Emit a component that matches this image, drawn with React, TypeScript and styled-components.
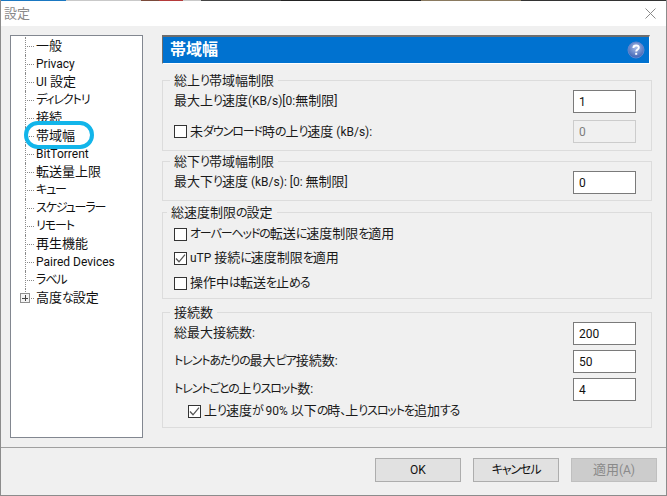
import React from 'react';
import styled, { createGlobalStyle } from 'styled-components';

const GlobalStyle = createGlobalStyle`
  html, body {
    margin: 0;
    padding: 0;
    background: #f0f0f0;
  }
  * {
    box-sizing: border-box;
  }
`;

const treeItems = [
  '一般',
  'Privacy',
  'UI 設定',
  'ディレクトリ',
  '接続',
  '帯域幅',
  'BitTorrent',
  '転送量上限',
  'キュー',
  'スケジューラー',
  'リモート',
  '再生機能',
  'Paired Devices',
  'ラベル',
  '高度な設定',
];

// 元画像のフォントは漢字が大きくかなが詰まっているので、文字種ごとに分ける
const Jp = ({ text }: { text: string }) => (
  <>
    {text
      .split(/([\u3400-\u9fff]+|[\u3001-\u30ff]+)/)
      .filter(Boolean)
      .map((part, i) => {
        if (/[\u3400-\u9fff]/.test(part)) return <Kanji key={i}>{part}</Kanji>;
        if (/[\u3001-\u30ff]/.test(part)) return <Kana key={i}>{part}</Kana>;
        return part;
      })}
  </>
);

const HelpIcon = () => (
  <svg width="18" height="18" viewBox="0 0 18 18">
    <defs>
      <radialGradient id="helpBall" cx="50%" cy="35%" r="65%">
        <stop offset="0%" stopColor="#a9bde8" />
        <stop offset="100%" stopColor="#3f63b4" />
      </radialGradient>
    </defs>
    <circle cx="9" cy="9" r="8" fill="url(#helpBall)" stroke="#5f86cf" strokeWidth="1" />
    <path
      d="M6.4 7 C6.4 5.3 7.6 4.5 9.1 4.5 C10.7 4.5 11.8 5.4 11.8 6.8 C11.8 8.6 9.2 8.6 9.2 10.6"
      fill="none"
      stroke="#fff"
      strokeWidth="1.9"
    />
    <rect x="8.2" y="11.8" width="2" height="2" fill="#fff" />
  </svg>
);

const CheckMark = () => (
  <svg width="11" height="11" viewBox="0 0 11 11">
    <path d="M1 5.5 L4 8.8 L10 1.6" fill="none" stroke="#555" strokeWidth="1.3" />
  </svg>
);

const App = () => {
  return (
    <Window>
      <GlobalStyle />
      <TopStrip />
      <TitleBar>
        <TitleText>設定</TitleText>
        <CloseButton>
          <svg width="11" height="11" viewBox="0 0 11 11">
            <path d="M0.5 0.5 L10.5 10.5 M10.5 0.5 L0.5 10.5" stroke="#8a8a8a" strokeWidth="1" fill="none" />
          </svg>
        </CloseButton>
      </TitleBar>

      <Body>
        <Tree>
          {treeItems.map((item, i) => (
            <TreeRow key={item} last={i === treeItems.length - 1}>
              {i === treeItems.length - 1 && <Expander />}
              <Jp text={item} />
            </TreeRow>
          ))}
          <Highlight />
        </Tree>

        <Panel>
          <Header>
            <HeaderTitle>帯域幅</HeaderTitle>
            <HelpIcon />
          </Header>

          <Group height={71}>
            <Legend>
              <Jp text="総上り帯域幅制限" />
            </Legend>
            <Row>
              <FieldLabel>
                <Jp text="最大上り速度(KB/s)[0:無制限]" />
              </FieldLabel>
              <NumberBox>1</NumberBox>
            </Row>
            <Row gap={7}>
              <CheckLabel>
                <CheckBox />
                <Label>
                  <Jp text="未ダウンロード時の上り速度 (kB/s):" />
                </Label>
              </CheckLabel>
              <NumberBox disabled>0</NumberBox>
            </Row>
          </Group>

          <Group height={40} top={10}>
            <Legend>
              <Jp text="総下り帯域幅制限" />
            </Legend>
            <Row>
              <FieldLabel>
                <Jp text="最大下り速度 (kB/s): [0: 無制限]" />
              </FieldLabel>
              <NumberBox>0</NumberBox>
            </Row>
          </Group>

          <Group height={87} top={11}>
            <Legend left={4}>
              <Jp text="総速度制限の設定" />
            </Legend>
            <CheckRow>
              <CheckLabel>
                <CheckBox />
                <Label>
                  <Jp text="オーバーヘッドの転送に速度制限を適用" />
                </Label>
              </CheckLabel>
            </CheckRow>
            <CheckRow>
              <CheckLabel>
                <CheckBox>
                  <CheckMark />
                </CheckBox>
                <Label>
                  <Jp text="uTP 接続に速度制限を適用" />
                </Label>
              </CheckLabel>
            </CheckRow>
            <CheckRow gap={1}>
              <CheckLabel>
                <CheckBox />
                <Label>
                  <Jp text="操作中は転送を止める" />
                </Label>
              </CheckLabel>
            </CheckRow>
          </Group>

          <Group height={116} top={13}>
            <Legend>
              <Jp text="接続数" />
            </Legend>
            <Row>
              <FieldLabel>
                <Jp text="総最大接続数:" />
              </FieldLabel>
              <NumberBox>200</NumberBox>
            </Row>
            <Row gap={5}>
              <FieldLabel>
                <Jp text="トレントあたりの最大ピア接続数:" />
              </FieldLabel>
              <NumberBox>50</NumberBox>
            </Row>
            <Row gap={5}>
              <FieldLabel>
                <Jp text="トレントごとの上りスロット数:" />
              </FieldLabel>
              <NumberBox>4</NumberBox>
            </Row>
            <IndentRow>
              <CheckLabel>
                <CheckBox>
                  <CheckMark />
                </CheckBox>
                <Label>
                  <Jp text="上り速度が 90% 以下の時、上りスロットを追加する" />
                </Label>
              </CheckLabel>
            </IndentRow>
          </Group>
        </Panel>
      </Body>

      <Footer>
        <DialogButton>OK</DialogButton>
        <DialogButton>
          <Jp text="キャンセル" />
        </DialogButton>
        <DialogButton disabled>
          <Jp text="適用(A)" />
        </DialogButton>
      </Footer>
    </Window>
  );
};

export default App;

const Kanji = styled.span`
  font-size: 13px;
  line-height: 0;
`;

const Kana = styled.span`
  font-size: 12px;
  line-height: 0;
  letter-spacing: -1.1px;
`;

const Window = styled.div`
  width: 667px;
  height: 496px;
  display: flex;
  flex-direction: column;
  overflow: hidden;
  background: #f0f0f0;
  border-left: 1px solid #8c8c8c;
  border-right: 1px solid #8c8c8c;
  border-bottom: 1px solid #8c8c8c;
  font-family: Roboto, 'Noto Sans CJK JP', sans-serif;
  font-size: 12px;
  line-height: 18px;
  font-feature-settings: 'palt';
  color: #1a1a1a;
`;

// 画面上端に写り込んだデスクトップの帯
const TopStrip = styled.div`
  height: 1px;
  flex: none;
  background: linear-gradient(
    to right,
    #1a78c2 0 65px,
    #c9c9c9 65px 140px,
    #7a4a3a 140px 158px,
    #b53a3a 158px 182px,
    #c9c9c9 182px 200px,
    #444 200px 280px,
    #222 280px 420px,
    #8a7a60 420px 520px,
    #333 520px 100%
  );
`;

const TitleBar = styled.div`
  height: 25px;
  flex: none;
  display: flex;
  align-items: center;
  justify-content: space-between;
  padding: 0 10px 0 3px;
  background: #fff;
`;

const TitleText = styled.span`
  font-size: 13px;
  color: #8a8a8a;
`;

const CloseButton = styled.div`
  display: flex;
  align-items: center;
`;

const Body = styled.div`
  flex: 1;
  display: flex;
  padding: 9px 14px 9px 9px;
  gap: 19px;
  min-height: 0;
`;

const Tree = styled.div`
  position: relative;
  width: 133px;
  flex: none;
  padding-top: 1px;
  background: #fff;
  border: 1px solid #828790;
`;

const TreeRow = styled.div<{ last?: boolean }>`
  position: relative;
  height: 18px;
  line-height: 18px;
  padding-left: 25px;
  white-space: nowrap;
  color: #111;

  &::before {
    content: '';
    position: absolute;
    left: 14px;
    top: 9px;
    width: 9px;
    border-top: 1px dotted #8a8a8a;
  }

  &::after {
    content: '';
    position: absolute;
    left: 14px;
    top: 0;
    height: ${(p) => (p.last ? '9px' : '18px')};
    border-left: 1px dotted #8a8a8a;
  }
`;

const Expander = styled.span`
  position: absolute;
  z-index: 1;
  left: 9px;
  top: 4px;
  width: 10px;
  height: 10px;
  background:
    linear-gradient(#444, #444) center / 6px 1px no-repeat,
    linear-gradient(#444, #444) center / 1px 6px no-repeat,
    #f4f4f4;
  border: 1px solid #8f8f8f;
`;

const Highlight = styled.div`
  position: absolute;
  left: 13px;
  top: 85px;
  width: 70px;
  height: 28px;
  border: 4px solid #12b5ea;
  border-radius: 14px;
`;

const Panel = styled.div`
  flex: 1;
  min-width: 0;
  display: flex;
  flex-direction: column;
`;

const Header = styled.div`
  height: 29px;
  margin: 0 2px 16px 0;
  flex: none;
  display: flex;
  align-items: center;
  justify-content: space-between;
  padding: 0 4px 0 7px;
  background: #0072d0;
  border-style: solid;
  border-width: 2px 1px 1px 1px;
  border-color: #6e6e6e #ffffff #ffffff #6e6e6e;
  color: #fff;
`;

const HeaderTitle = styled.span`
  font-size: 16px;
  font-weight: 700;
`;

const Group = styled.div<{ height: number; top?: number }>`
  position: relative;
  height: ${(p) => p.height}px;
  margin-top: ${(p) => p.top ?? 0}px;
  flex: none;
  padding: 9px 15px 0 11px;
  border: 1px solid #dcdcdc;
`;

const Legend = styled.span<{ left?: number }>`
  position: absolute;
  left: ${(p) => p.left ?? 7}px;
  top: -9px;
  padding: 0 4px;
  line-height: 18px;
  background: #f0f0f0;
  color: #1a1a1a;
`;

const Row = styled.div<{ gap?: number }>`
  height: 23px;
  margin-top: ${(p) => p.gap ?? 0}px;
  display: flex;
  align-items: center;
  justify-content: space-between;
`;

const CheckRow = styled.div<{ gap?: number }>`
  height: 24px;
  margin-top: ${(p) => p.gap ?? 0}px;
  display: flex;
  align-items: center;
`;

const IndentRow = styled.div`
  height: 20px;
  padding-left: 14px;
  display: flex;
  align-items: center;
`;

const Label = styled.span`
  white-space: nowrap;
`;

const FieldLabel = styled(Label)`
  padding-bottom: 2px;
`;

const CheckLabel = styled.label`
  display: flex;
  align-items: center;
  gap: 3px;
  white-space: nowrap;
`;

const CheckBox = styled.span`
  width: 13px;
  height: 13px;
  flex: none;
  display: flex;
  align-items: center;
  justify-content: center;
  background: #fff;
  border: 1px solid #333;
`;

const NumberBox = styled.div<{ disabled?: boolean }>`
  width: 63px;
  height: 100%;
  display: flex;
  align-items: center;
  padding-left: 5px;
  font-size: 12px;
  background: ${(p) => (p.disabled ? '#f0f0f0' : '#fff')};
  border: 1px solid ${(p) => (p.disabled ? '#cccccc' : '#7a7a7a')};
  color: ${(p) => (p.disabled ? '#7d7d7d' : '#111')};
`;

const Footer = styled.div`
  height: 48px;
  flex: none;
  display: flex;
  justify-content: flex-end;
  gap: 12px;
  padding: 10px 9px 0 0;
  border-top: 1px solid #a0a0a0;
`;

const DialogButton = styled.button`
  width: 86px;
  height: 24px;
  padding: 0;
  font: inherit;
  font-feature-settings: inherit;
  color: #111;
  background: #e1e1e1;
  border: 1px solid #adadad;

  &:disabled {
    color: #8a8a8a;
    background: #cccccc;
    border-color: #bfbfbf;
  }
`;
